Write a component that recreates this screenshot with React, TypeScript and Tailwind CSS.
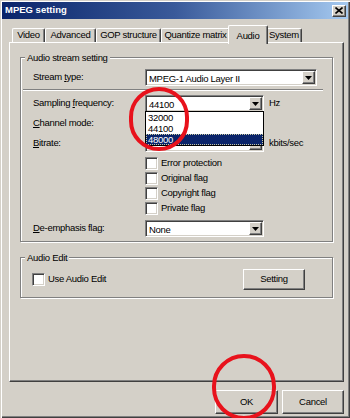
import React from "react";

const raised =
  "border border-t-white border-l-white border-r-[#404040] border-b-[#404040] shadow-[inset_-1px_-1px_0_#808080]";
const sunken =
  "border border-t-[#808080] border-l-[#808080] border-r-white border-b-white shadow-[inset_1px_1px_0_#404040,inset_-1px_-1px_0_#d4d0c8]";
const etched = "border border-[#808080] shadow-[1px_1px_0_#fff,inset_1px_1px_0_#fff]";

function Arrow() {
  return (
    <svg width="7" height="4" viewBox="0 0 7 4">
      <path d="M0 0h7L3.5 4z" fill="#000" />
    </svg>
  );
}

function Combo({ w, value }: { w: string; value?: string }) {
  return (
    <div className={`${sunken} ${w} h-[17px] bg-white p-[1px] flex`}>
      <span className="flex-1 pl-[2px] leading-[13px] pt-[1px]">{value}</span>
      <div className={`${raised} w-[13px] h-[13px] bg-[#d4d0c8] flex items-center justify-center`}>
        <Arrow />
      </div>
    </div>
  );
}

function Check({ label }: { label: string }) {
  return (
    <div className="flex items-center h-[13px]">
      <div className={`${sunken} w-[13px] h-[13px] bg-white`} />
      <span className="ml-[3px]">{label}</span>
    </div>
  );
}

function Group({ title, children }: { title: string; children: React.ReactNode }) {
  return (
    <div className={etched}>
      <div className="-mt-[7px] ml-[4px] px-[2px] w-fit bg-[#d4d0c8] leading-[13px]">{title}</div>
      {children}
    </div>
  );
}

function Row({ label, children }: { label: React.ReactNode; children: React.ReactNode }) {
  return (
    <div className="flex items-center h-[17px] pl-[12px]">
      <span className="w-[112px]">{label}</span>
      {children}
    </div>
  );
}

const tabs = ["Video", "Advanced", "GOP structure", "Quantize matrix", "Audio", "System"];
const tabW: Record<string, string> = {
  Video: "w-[33px]",
  Advanced: "w-[51px]",
  "GOP structure": "w-[65px]",
  "Quantize matrix": "w-[69px]",
  Audio: "w-[40px]",
  System: "w-[36px]",
};

export default function App() {
  return (
    <div className="relative w-[350px] h-[418px] overflow-hidden bg-[#d4d0c8] text-black text-[9.5px] tracking-[-0.3px] font-['Liberation_Sans',Arial,sans-serif] shadow-[inset_1px_1px_0_#d4d0c8,inset_2px_2px_0_#fff,inset_-1px_-1px_0_#404040,inset_-2px_-2px_0_#808080] pt-[2px] px-[2px]">
      {/* title bar */}
      <div className="h-[17px] flex items-center justify-between bg-gradient-to-r from-[#0a246a] via-[#3a5a9a] to-[#a6caf0] pl-[3px] pr-[2px]">
        <span className="text-white font-bold text-[9.5px] tracking-normal">MPEG setting</span>
        <div className={`${raised} w-[14px] h-[12px] bg-[#d4d0c8] flex items-center justify-center`}>
          <svg width="8" height="7" viewBox="0 0 8 7">
            <path d="M0.5 0.5l7 6M7.5 0.5l-7 6" stroke="#000" strokeWidth="1.6" />
          </svg>
        </div>
      </div>

      <div className="pl-[7px] pr-[4px] pt-[6px]">
        {/* tabs */}
        <div className="flex items-end h-[17px] pl-[3px]">
          {tabs.map((t) =>
            t === "Audio" ? (
              <div
                key={t}
                className={`${tabW[t]} -mx-[2px] -mb-[2px] relative z-10 h-[19px] bg-[#d4d0c8] border-t border-l border-t-white border-l-white border-r border-r-[#404040] shadow-[inset_-1px_0_0_#808080] rounded-tl-[2px] rounded-tr-[2px] flex justify-center pt-[3px]`}
              >
                {t}
              </div>
            ) : (
              <div
                key={t}
                className={`${tabW[t]} h-[14px] border-t border-l border-t-white border-l-white border-r border-r-[#404040] shadow-[inset_-1px_0_0_#808080] rounded-tl-[2px] rounded-tr-[2px] flex justify-center items-center`}
              >
                {t}
              </div>
            )
          )}
        </div>

        {/* panel */}
        <div className={`${raised} h-[340px] px-[10px] pt-[14px]`}>
          <Group title="Audio stream setting">
            <div className="mt-[5px]">
              <Row label={<>Stream <u>t</u>ype:</>}>
                <Combo w="w-[172px]" value="MPEG-1 Audio Layer II" />
              </Row>
            </div>
            <div className="mt-[3px] ml-[2px] mr-[9px] h-[2px] border-t border-t-[#808080] border-b border-b-white" />
            <div className="mt-[4px]">
              <Row label={<>Sampling <u>f</u>requency:</>}>
                <div className="relative">
                  <Combo w="w-[119px]" value="44100" />
                  <div className="absolute z-20 left-0 top-[16px] w-[119px] h-[35px] bg-white border border-black">
                    <div className="h-[11px] leading-[11px] pl-[2px]">32000</div>
                    <div className="h-[11px] leading-[11px] pl-[2px]">44100</div>
                    <div className="h-[11px] leading-[10px] pl-[1px] bg-[#0a246a] text-white border border-dotted border-[#c8c8a0]">
                      48000
                    </div>
                  </div>
                </div>
                <span className="ml-[5px]">Hz</span>
              </Row>
            </div>
            <div className="mt-[3px]">
              <Row label={<><u>C</u>hannel mode:</>}>
                <Combo w="w-[119px]" value="" />
              </Row>
            </div>
            <div className="mt-[3px]">
              <Row label={<><u>B</u>itrate:</>}>
                <Combo w="w-[119px]" value="" />
                <span className="ml-[5px]">kbits/sec</span>
              </Row>
            </div>
            <div className="mt-[5px] pl-[124px] flex flex-col gap-[2px]">
              <Check label="Error protection" />
              <Check label="Original flag" />
              <Check label="Copyright flag" />
              <Check label="Private flag" />
            </div>
            <div className="mt-[5px] mb-[4px]">
              <Row label={<><u>D</u>e-emphasis flag:</>}>
                <Combo w="w-[119px]" value="None" />
              </Row>
            </div>
          </Group>

          <div className="mt-[15px]">
            <Group title="Audio Edit">
              <div className="mt-[5px] mb-[7px] flex items-center justify-between pl-[11px] pr-[27px]">
                <Check label="Use Audio Edit" />
                <div className={`${raised} w-[62px] h-[21px] flex items-center justify-center`}>Setting</div>
              </div>
            </Group>
          </div>
        </div>

        {/* buttons */}
        <div className="mt-[8px] flex justify-end gap-[4px]">
          <div className={`${raised} w-[63px] h-[24px] flex items-center justify-center`}>OK</div>
          <div className={`${raised} w-[62px] h-[24px] flex items-center justify-center`}>Cancel</div>
        </div>
      </div>

      {/* red annotation circles */}
      <div className="absolute left-[129px] top-[87px] w-[60px] h-[64px] rounded-full border-[4px] border-[#e8121c] z-30" />
      <div className="absolute left-[212px] top-[354px] w-[64px] h-[66px] rounded-full border-[4px] border-[#e8121c] z-30" />
    </div>
  );
}
